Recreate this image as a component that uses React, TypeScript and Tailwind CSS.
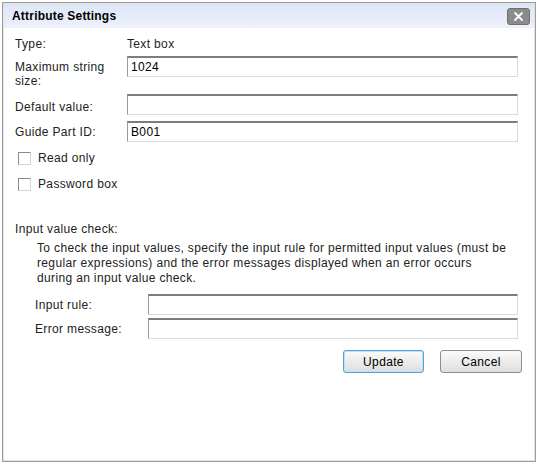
import React from 'react';

const inputCls =
    'h-[21px] bg-white border border-t-[#7d7d7d] border-l-[#9a9a9a] border-r-[#dcdcdc] border-b-[#dcdcdc] border-t-2 px-[3px] text-[12px] leading-[17px] tracking-[0.35px] text-black outline-none';

function Field({ value = '', width }: { value?: string; width: string }) {
    return (
        <input
            readOnly
            defaultValue={value}
            className={`${inputCls} ${width}`}
        />
    );
}

function Check({ label, className }: { label: string; className: string }) {
    return (
        <label className={`flex items-center h-[16px] ${className}`}>
            <span className="ml-[3px] w-[13px] h-[13px] bg-white border border-t-[#8a8a8a] border-l-[#8a8a8a] border-r-[#d4d4d4] border-b-[#d4d4d4]" />
            <span className="ml-[7px]">{label}</span>
        </label>
    );
}

export default function App() {
    return (
        <div
            className="w-[540px] h-[465px] bg-white pt-[2px] pl-[2px] text-[12px] tracking-[0.35px] text-[#222]"
            style={{ fontFamily: '"Liberation Sans", Arial, sans-serif' }}>
            <div className="w-[534px] h-[460px] border border-[#9c9c9c] shadow-[inset_0_0_0_1px_#e4e4e4] flex flex-col">
                {/* title bar */}
                <div className="h-[24px] mx-[1px] mt-[1px] flex items-center justify-between bg-gradient-to-b from-[#dde5f7] to-[#edf1fb]">
                    <span className="ml-[8px] font-bold text-[12px] tracking-[0.2px] text-black">
                        Attribute Settings
                    </span>
                    <button className="mr-[4px] w-[23px] h-[17px] rounded-[3px] bg-[#8b8b8b] border border-[#6f6f6f] flex items-center justify-center">
                        <svg width="11" height="11" viewBox="0 0 11 11">
                            <path
                                d="M2 2 L9 9 M9 2 L2 9"
                                stroke="#fff"
                                strokeWidth="1.8"
                                strokeLinecap="round"
                            />
                        </svg>
                    </button>
                </div>

                <div className="pl-[12px] flex flex-col">
                    <div className="flex mt-[8px] h-[16px] leading-[16px]">
                        <span className="w-[112px]">Type:</span>
                        <span>Text box</span>
                    </div>

                    <div className="flex items-start mt-[4px]">
                        <span className="w-[112px] pt-[4px] leading-[14px]">
                            Maximum string
                            <br />
                            size:
                        </span>
                        <Field value="1024" width="w-[391px]" />
                    </div>

                    <div className="flex items-start mt-[6px]">
                        <span className="w-[112px] pt-[6px] leading-[14px]">
                            Default value:
                        </span>
                        <Field width="w-[391px]" />
                    </div>

                    <div className="flex items-start mt-[6px]">
                        <span className="w-[112px] pt-[4px] leading-[14px]">
                            Guide Part ID:
                        </span>
                        <Field value="B001" width="w-[391px]" />
                    </div>

                    <Check label="Read only" className="mt-[8px]" />
                    <Check label="Password box" className="mt-[10px]" />

                    <div className="mt-[29px] h-[16px] leading-[16px]">
                        Input value check:
                    </div>

                    <div className="ml-[22px] mt-[4px] leading-[15px] whitespace-nowrap">
                        To check the input values, specify the input rule for
                        permitted input values (must be
                        <br />
                        regular expressions) and the error messages displayed
                        when an error occurs
                        <br />
                        during an input value check.
                    </div>

                    <div className="flex items-center mt-[8px] ml-[20px]">
                        <span className="w-[113px]">Input rule:</span>
                        <Field width="w-[370px]" />
                    </div>
                    <div className="flex items-center mt-[3px] ml-[20px]">
                        <span className="w-[113px]">Error message:</span>
                        <Field width="w-[370px]" />
                    </div>

                    <div className="flex justify-end gap-[16px] mt-[11px] pr-[13px]">
                        <button className="w-[81px] h-[23px] rounded-[3px] border border-[#4fa3d9] shadow-[inset_0_0_0_1px_#bfe0f5] bg-gradient-to-b from-[#fbfbfb] to-[#dedede] text-[12px] text-black">
                            Update
                        </button>
                        <button className="w-[82px] h-[23px] rounded-[3px] border border-[#8e8e8e] bg-gradient-to-b from-[#fbfbfb] to-[#dedede] text-[12px] text-black">
                            Cancel
                        </button>
                    </div>
                </div>
            </div>
        </div>
    );
}
